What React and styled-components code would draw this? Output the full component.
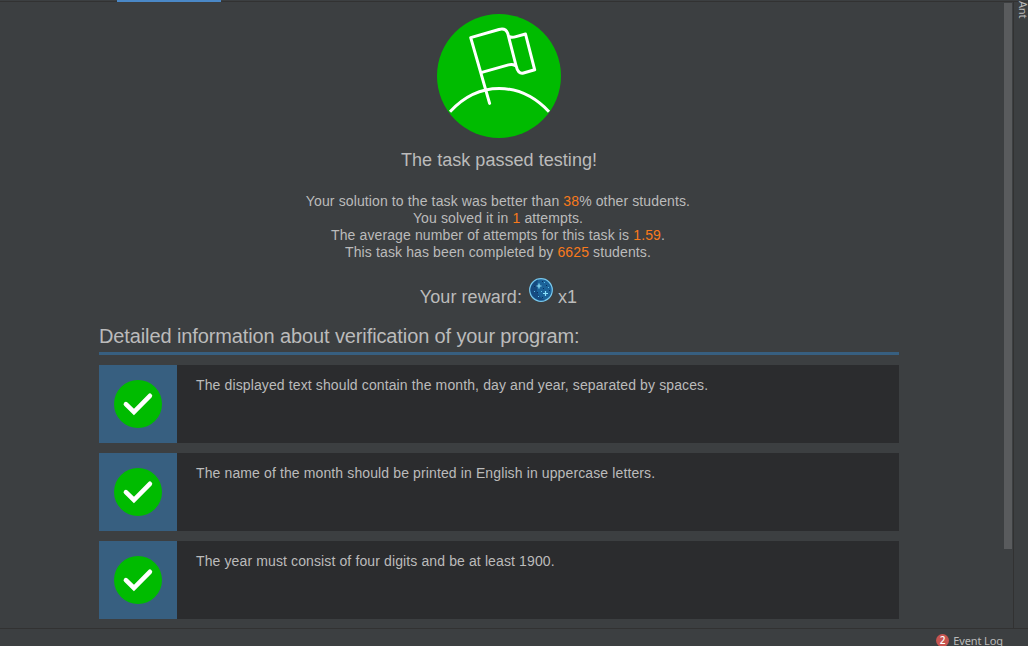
import React from "react";
import styled, { createGlobalStyle } from "styled-components";

const GlobalStyle = createGlobalStyle`
  * { box-sizing: border-box; }
  html, body { margin: 0; padding: 0; background: #3c3f41; overflow: hidden; }
`;

const Window = styled.div`
  width: 1028px;
  height: 646px;
  display: flex;
  flex-direction: column;
  overflow: hidden;
  background: #3c3f41;
  color: #bbbbbb;
  font-family: "Liberation Sans", Arial, sans-serif;
`;

const TabStrip = styled.div`
  flex: none;
  height: 2px;
  padding-left: 117px;
  background: linear-gradient(#3c3f41 0 1px, #323232 1px 2px);
`;

const ActiveTab = styled.div`
  width: 104px;
  height: 2px;
  background: #4a88c7;
`;

const Main = styled.div`
  flex: 1;
  min-height: 0;
  display: flex;
`;

const Viewport = styled.main`
  width: 1004px;
  padding: 12px 105px 0 99px;
  overflow: hidden;
  display: flex;
  flex-direction: column;
`;

const ScrollTrack = styled.div`
  width: 9px;
  padding-top: 1px;
`;

const ScrollThumb = styled.div`
  width: 8px;
  height: 546px;
  background: #595b5d;
`;

const ToolStripe = styled.aside`
  width: 15px;
  border-left: 1px solid #323232;
`;

const StripeLabel = styled.div`
  writing-mode: vertical-rl;
  width: 14px;
  margin-left: 2px;
  margin-top: -1px;
  line-height: 14px;
  font-family: "Noto Sans", sans-serif;
  font-size: 11px;
  letter-spacing: -0.2px;
`;

const FlagBadge = styled.svg`
  display: block;
  flex: none;
  margin: 0 auto;
`;

const Title = styled.h1`
  margin: 11px 0 0;
  font-size: 18px;
  line-height: 22px;
  font-weight: 400;
  text-align: center;
  letter-spacing: 0.04px;
`;

const Stats = styled.div`
  margin: 22px 2px 0 0;
  text-align: center;
`;

const StatLine = styled.p`
  margin: 0;
  font-size: 14px;
  line-height: 17px;
  letter-spacing: 0.12px;
`;

const Value = styled.span`
  color: #f87a1c;
`;

const Reward = styled.div`
  height: 30px;
  margin: 16px 1px 0 0;
  display: flex;
  justify-content: center;
  font-size: 18px;
  line-height: 22px;
`;

const RewardText = styled.span`
  padding-top: 9px;
  letter-spacing: 0.06px;
`;

const Gem = styled.svg`
  display: block;
  margin: 1px 5px 0 7px;
`;

const SectionTitle = styled.h2`
  margin: 17px 0 0;
  height: 31px;
  border-bottom: 3px solid #375f80;
  font-size: 20px;
  line-height: 24px;
  font-weight: 400;
  letter-spacing: -0.115px;
`;

const Checks = styled.div`
  display: flex;
  flex-direction: column;
  gap: 10px;
  margin-top: 10px;
`;

const CheckRow = styled.div`
  height: 78px;
  display: flex;
  background: #2b2c2e;
`;

const CheckStatus = styled.div`
  width: 78px;
  display: flex;
  align-items: center;
  justify-content: center;
  background: #375f80;
`;

const CheckText = styled.p`
  margin: 0;
  padding: 12px 0 0 19px;
  font-size: 14px;
  line-height: 17px;
  letter-spacing: 0.12px;
`;

const StatusBar = styled.footer`
  flex: none;
  height: 18px;
  border-top: 1px solid #323232;
  display: flex;
  justify-content: flex-end;
  padding: 4px 25px 0 0;
`;

const EventCount = styled.span`
  width: 13px;
  height: 13px;
  margin: 1px 4px 0 0;
  border-radius: 50%;
  background: #c75450;
  color: #ffffff;
  font: 500 10px/13px "Noto Sans", sans-serif;
  text-align: center;
`;

const EventLabel = styled.span`
  font: 11px/15px "Noto Sans", sans-serif;
  letter-spacing: -0.1px;
`;

const checks = [
  "The displayed text should contain the month, day and year, separated by spaces.",
  "The name of the month should be printed in English in uppercase letters.",
  "The year must consist of four digits and be at least 1900.",
];

function FlagIcon() {
  return (
    <FlagBadge width="124" height="124" viewBox="0 0 124 124">
      <circle cx="62" cy="62" r="62" fill="#00bb00" />
      <g fill="none" stroke="#fff" strokeWidth="3" strokeLinecap="round" strokeLinejoin="round">
        <path d="M52.6 89.400L33.700 23.600L62 15.500Q68.500 13.600 70.800 19.500L79 51.500Q81 60.500 86.500 59L97.700 55.800L88.500 20L79 22.600Q74.500 23.800 72.300 22.600" />
        <path d="M44.800 58.400L71.500 50.900Q75.500 50 78 51.500" />
        <path d="M13 97.700Q34.500 74.500 62.300 74.500Q90 74.500 112 97.700" strokeLinecap="butt" />
      </g>
    </FlagBadge>
  );
}

function GemIcon() {
  return (
    <Gem width="24" height="24" viewBox="0 0 24 24">
      <circle cx="12" cy="12" r="11.300" fill="#1b6299" stroke="#78c8ed" strokeWidth="1.200" />
      <path d="M9 1.500Q2 5 1.500 12Q2 19 10 22.300H16L11 19L8 14L8 7Z" fill="#164a80" />
      <path d="M10 5.500v5M7.500 8h5M16.500 13v5M14 15.500h5" stroke="#8ce0fa" strokeWidth="1.200" />
      <path d="M15 4h1v1h-1zM19 9h1v1h-1zM12 13h1v1h-1zM9 18h1v1h-1zM5 13h1v1h-1z" fill="#5cbce8" />
      <path d="M13 3h1v1h-1zM17 7h1v1h-1zM14 10h1v1h-1zM20 12h1v1h-1zM8 14h1v1h-1zM13 19h1v1h-1zM5 8h1v1h-1z" fill="#0b315f" />
    </Gem>
  );
}

function PassedIcon() {
  return (
    <svg width="48" height="48" viewBox="0 0 48 48">
      <circle cx="24" cy="24" r="24" fill="#00bb00" />
      <path
        d="M11.900 24.200L19.900 32L35.900 15.800"
        fill="none"
        stroke="#fff"
        strokeWidth="4.600"
        strokeLinecap="round"
      />
    </svg>
  );
}

export default function App() {
  return (
    <Window>
      <GlobalStyle />
      <TabStrip>
        <ActiveTab />
      </TabStrip>
      <Main>
        <Viewport>
          <FlagIcon />
          <Title>The task passed testing!</Title>
          <Stats>
            <StatLine>
              Your solution to the task was better than <Value>38</Value>% other students.
            </StatLine>
            <StatLine>
              You solved it in <Value>1</Value> attempts.
            </StatLine>
            <StatLine>
              The average number of attempts for this task is <Value>1.59</Value>.
            </StatLine>
            <StatLine>
              This task has been completed by <Value>6625</Value> students.
            </StatLine>
          </Stats>
          <Reward>
            <RewardText>Your reward:</RewardText>
            <GemIcon />
            <RewardText>x1</RewardText>
          </Reward>
          <SectionTitle>Detailed information about verification of your program:</SectionTitle>
          <Checks>
            {checks.map((text) => (
              <CheckRow key={text}>
                <CheckStatus>
                  <PassedIcon />
                </CheckStatus>
                <CheckText>{text}</CheckText>
              </CheckRow>
            ))}
          </Checks>
        </Viewport>
        <ScrollTrack>
          <ScrollThumb />
        </ScrollTrack>
        <ToolStripe>
          <StripeLabel>Ant</StripeLabel>
        </ToolStripe>
      </Main>
      <StatusBar>
        <EventCount>2</EventCount>
        <EventLabel>Event Log</EventLabel>
      </StatusBar>
    </Window>
  );
}
